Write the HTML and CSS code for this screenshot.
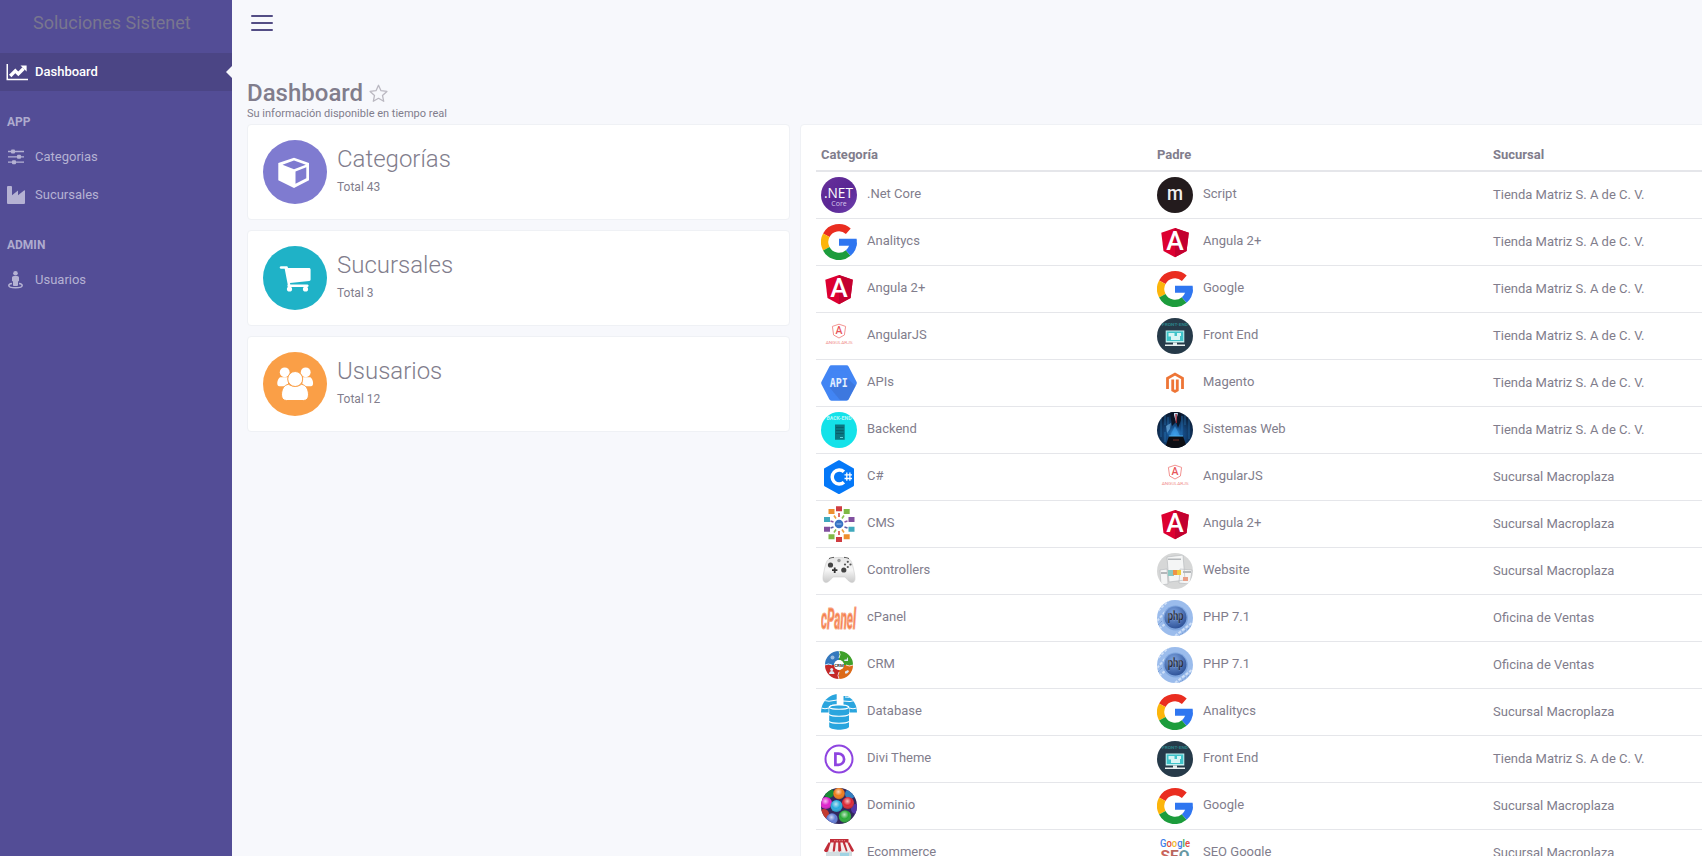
FILE: index.html
```html
<!DOCTYPE html>
<html lang="es">
<head>
<meta charset="utf-8">
<title>Dashboard</title>
<link rel="stylesheet" href="styles.css">
</head>
<body>
<svg class="sprite" width="0" height="0" aria-hidden="true">
  <defs>
    <clipPath id="round"><circle cx="18" cy="18" r="18"/></clipPath>
    <linearGradient id="g-net" x1="0" y1="0" x2="1" y2="1"><stop offset="0" stop-color="#68329b"/><stop offset=".5" stop-color="#5a2694"/><stop offset="1" stop-color="#6d40ae"/></linearGradient>
    <radialGradient id="g-sys" cx=".5" cy=".62" r=".6"><stop offset="0" stop-color="#3aa0f0"/><stop offset=".35" stop-color="#17508c"/><stop offset="1" stop-color="#0b1b33"/></radialGradient>
    <radialGradient id="g-php" cx=".4" cy=".3" r=".75"><stop offset="0" stop-color="#7fa6e2"/><stop offset="1" stop-color="#2b4f95"/></radialGradient>
    <radialGradient id="g-ball" cx=".45" cy=".35" r=".7"><stop offset="0" stop-color="#fff" stop-opacity=".7"/><stop offset=".5" stop-color="#fff" stop-opacity="0"/><stop offset="1" stop-color="#000" stop-opacity=".3"/></radialGradient>
    <linearGradient id="g-pad" x1="0" y1="0" x2="0" y2="1"><stop offset="0" stop-color="#e6e6e6"/><stop offset=".5" stop-color="#f6f6f6"/><stop offset="1" stop-color="#c9c9c9"/></linearGradient>
  </defs>
</svg>
<template id="logos">
  <svg data-name="net" viewBox="0 0 36 36"><circle cx="18" cy="18" r="18" fill="url(#g-net)"/><text x="17.5" y="21" class="t" font-family="Open Sans" font-size="14" textLength="29" lengthAdjust="spacingAndGlyphs" fill="#fff">.NET</text><text x="18" y="28.5" class="t" font-family="Open Sans" font-size="7" fill="#d9c9ee">Core</text></svg>
  <svg data-name="google" viewBox="0 0 36 36"><g fill="none" stroke-width="7.3"><path stroke="#ea2d20" d="M27.3 7.2A14.3 14.3 0 0 0 5.3 11.3"/><path stroke="#fcb50b" d="M5.3 11.3A14.3 14.3 0 0 0 5.3 24.7"/><path stroke="#1c9c3c" d="M5.3 24.7A14.3 14.3 0 0 0 27.2 29"/><path stroke="#2f76f0" d="M27.2 29A14.3 14.3 0 0 0 32.3 18.4"/></g><path fill="#2f76f0" d="M18 14.8h17.6c.4 2.5.2 4.7-.3 7H18z"/></svg>
  <svg data-name="angular" viewBox="0 0 36 36"><path fill="#dd0031" d="M18 4 31.8 8.8 29.6 27 18 33.3 6.5 27 4.3 8.8z"/><path fill="#c3002f" d="M18 4 31.8 8.8 29.6 27 18 33.3z"/><text x="18" y="25.8" class="t" font-family="Roboto" font-weight="500" font-size="25" textLength="17.5" lengthAdjust="spacingAndGlyphs" fill="#fff">A</text></svg>
  <svg data-name="angularjs" viewBox="0 0 36 36"><path fill="none" stroke="#f08784" stroke-width=".9" d="M18 6.2 24.6 8.4 23.4 17 18 20 12.6 17 11.4 8.4z"/><text x="18" y="16.4" class="t" font-family="Roboto" font-weight="500" font-size="10.5" fill="#e8555a">A</text><text x="18.2" y="26.3" class="t" font-family="Roboto" font-size="4.3" textLength="27" lengthAdjust="spacingAndGlyphs" fill="#f08e8c">ANGULARJS</text></svg>
  <svg data-name="api" viewBox="0 0 36 36"><path fill="#4285f4" stroke="#4285f4" stroke-width="5" stroke-linejoin="round" d="M10.500 2.800h15L33.300 18l-7.800 15.200h-15L2.700 18z"/><path fill="#3a70d0" d="M9 23 19 35h8l7.500-14L26 13z" opacity=".6"/><text x="17.800" y="22.400" class="t" font-family="DejaVu Sans Mono" font-weight="700" font-size="11.500" textLength="18" lengthAdjust="spacingAndGlyphs" fill="#e3efff">API</text></svg>
  <svg data-name="backend" viewBox="0 0 36 36"><g clip-path="url(#round)"><path fill="#14e2e9" d="M0 0h36v36H0z"/><text x="18" y="7.600" class="t" font-family="Roboto" font-weight="700" font-size="4.500" textLength="25" lengthAdjust="spacingAndGlyphs" fill="#b5f8fa">BACK-END</text><path fill="#0b7681" d="M14 12.500h9.700v15.200H14z"/><path stroke="#095965" stroke-width=".8" d="M15 15.500h7.700M15 18.500h7.700M15 21.500h7.700"/><path stroke="#7be9ec" stroke-width=".8" d="M19 25.500h3"/></g></svg>
  <svg data-name="csharp" viewBox="0 0 36 36"><path fill="#0478f8" stroke="#0478f8" stroke-width="2" stroke-linejoin="round" d="M18 2.200 32 10v16.300L18 34 4 26.300V10z"/><path fill="none" stroke="#fff" stroke-width="3.500" d="M22.900 12.800a7 7 0 1 0 0 10.400"/><path stroke="#fff" stroke-width="1.300" d="M23.500 15.900h7.500M23.500 19.500h7.500M25.800 13.500v8.200M28.900 13.500v8.200"/></svg>
  <svg data-name="cms" viewBox="0 0 36 36"><g stroke-width="1.600"><path stroke="#d64a44" d="M18 7v4M18 25v4"/><path stroke="#eea03c" d="M13 9.500l2 3M23 26.500l-2-3"/><path stroke="#8cc152" d="M23 9.500l-2 3M13 26.500l2-3"/><path stroke="#8a5aa8" d="M9.500 15l3 1M26.500 15l-3 1"/><path stroke="#5a5fa8" d="M9.500 22l3-1M26.500 22l-3-1"/></g><circle cx="18" cy="18" r="4.300" fill="#3774c4"/><path stroke="#9cc0ea" d="M15.500 18h5"/><path fill="#cf3d42" d="M15 .3h6v5h-6zM15 31h6v5h-6z"/><path fill="#ee8f2e" d="M7.500 3h6v5h-6zM22.700 28.300h6v5h-6z"/><path fill="#7fba45" d="M22.700 3h6v5h-6zM7.500 28.300h6v5h-6z"/><path fill="#3fa9bd" d="M3 11h6v5H3zM27.500 20.700h6v5h-6z"/><path fill="#81519f" d="M27.500 11h6v5h-6zM3 20.700h6v5H3z"/></svg>
  <svg data-name="pad" viewBox="0 0 36 36"><path fill="url(#g-pad)" stroke="#cdcdcd" stroke-width=".6" d="M9 5.500c5-1.500 13-1.500 18 0 3 1 4 4 5.300 9.500 1 5 2.900 11.500.6 13.800-3 2.300-5.900-1.300-8.900-4.800H12c-3 3.500-5.900 7.100-8.900 4.800-2.300-2.300-.4-8.800.6-13.800C5 9.500 6 6.500 9 5.500z"/><path stroke="#555" stroke-width="1" d="M8 5.600c2-1 3.500-1.200 5-1.200M28 5.600c-2-1-3.500-1.200-5-1.200" fill="none"/><circle cx="18" cy="7.500" r="1.700" fill="#999"/><circle cx="9.500" cy="12" r="2.600" fill="#444"/><circle cx="22.800" cy="17" r="2.600" fill="#444"/><path stroke="#333" stroke-width="1.800" d="M13.700 14.500v5.400M11 17.200h5.400"/><g fill="#555"><circle cx="26.800" cy="8.800" r="1.100"/><circle cx="26.800" cy="14" r="1.100"/><circle cx="24" cy="11.500" r="1.100"/><circle cx="29.500" cy="11.500" r="1.100"/></g></svg>
  <svg data-name="cpanel" viewBox="0 0 36 36"><g transform="translate(17.500 29) scale(1 2.300)"><text x="0" y="0" class="t" font-family="Roboto" font-style="italic" font-weight="700" font-size="12.500" textLength="35" lengthAdjust="spacingAndGlyphs" fill="#f47f4e" stroke="#f9a784" stroke-width=".5">cPanel</text></g></svg>
  <svg data-name="crm" viewBox="0 0 36 36"><g fill="none" stroke-width="9.300"><path stroke="#3478bd" d="M8.600 18A9.400 9.400 0 0 1 18 8.600"/><path stroke="#3fa02b" d="M18 8.600A9.400 9.400 0 0 1 27.400 18"/><path stroke="#dc6a18" d="M27.400 18A9.400 9.400 0 0 1 18 27.400"/><path stroke="#c42828" d="M18 27.400A9.400 9.400 0 0 1 8.600 18"/></g><path fill="none" stroke="#fff" stroke-width=".8" d="M18 4q2 3.500 0 7M18 25q-2 3.500 0 7M4 18q3.500-2 7 0M25 18q3.500 2 7 0"/><g fill="#dfe9f4"><circle cx="11.500" cy="10.500" r="2" opacity=".6"/><path d="M23 14l1-2 1 1 2-3v4zM24 24.500l3-1.500 1 1.500-2 2h-2z"/><circle cx="10.700" cy="22.500" r="1.500"/><path d="M8 27c0-4 5.500-4 5.500 0z"/></g><circle cx="18" cy="18" r="5" fill="#fff"/><text x="18" y="19.600" class="t" font-family="Roboto" font-weight="700" font-size="4.400" fill="#333">CRM</text></svg>
  <svg data-name="database" viewBox="0 0 36 36"><g clip-path="url(#round)" fill="#2aa5de"><path d="M0 0h15.700v10.500Q8 10 7.600 14v4.500H0zM22.500 2H36v16.500h-7.600V14q-.4-2-5.900-3z"/><path fill="none" stroke="#fff" stroke-width="1" d="M0 6q8 2.500 16 0M22 7q7 1.500 14-1M0 14q4 1.500 8 0M28 14q4 1.500 8 0M24 3q4 .5 8 0"/></g><path fill="#2aa5de" d="M8.200 13c3-2.500 16.800-2.500 19.800 0v20c-3 3.600-16.800 3.600-19.800 0z"/><path fill="none" stroke="#fff" stroke-width="1.100" d="M8 13.500c3 2.300 17 2.300 20 0M8 20.500c3 2.300 17 2.300 20 0M8 27.500c3 2.300 17 2.300 20 0M8 13c3-3 17-3 20 0"/></svg>
  <svg data-name="divi" viewBox="0 0 36 36"><circle cx="18" cy="18" r="13.500" fill="none" stroke="#8e44e0" stroke-width="2"/><path fill="none" stroke="#8e44e0" stroke-width="2.700" d="M14.400 12.600h3.100a5.600 5.600 0 0 1 0 11.200h-3.100z"/></svg>
  <svg data-name="dominio" viewBox="0 0 36 36"><g clip-path="url(#round)"><path fill="#33275e" d="M0 0h36v36H0z"/><circle cx="8" cy="5" r="5" fill="#1a8a35"/><circle cx="29" cy="6" r="5" fill="#347fbf"/><circle cx="35" cy="21" r="5" fill="#5337a8"/><circle cx="3" cy="26" r="5" fill="#c33b30"/><circle cx="18" cy="5.500" r="5.700" fill="#ee7b1b"/><circle cx="5" cy="15" r="6" fill="#df22cc"/><circle cx="27" cy="15" r="6" fill="#dc2734"/><circle cx="15.500" cy="18" r="6" fill="#28aadd"/><circle cx="24" cy="28.500" r="6.200" fill="#28aa36"/><circle cx="11" cy="31" r="5.700" fill="#607bd4"/><g fill="url(#g-ball)"><circle cx="18" cy="5.500" r="5.700"/><circle cx="5" cy="15" r="6"/><circle cx="27" cy="15" r="6"/><circle cx="15.500" cy="18" r="6"/><circle cx="24" cy="28.500" r="6.200"/><circle cx="11" cy="31" r="5.700"/></g></g></svg>
  <svg data-name="shop" viewBox="0 0 36 36"><path fill="#d3dde0" d="M5 15h26v18H5z"/><path fill="#9fd3e3" d="M19 18h9v8h-9z"/><path fill="#f7eeee" d="M7.500 7.500h21L33 15.500c-.8 2-3.300 2-4.100 0-.9 2-3.400 2-4.300 0-.9 2-3.400 2-4.300 0-.9 2-3.400 2-4.300 0-.9 2-3.400 2-4.300 0-.9 2-3.400 2-4.300 0-.9 2-3.500 2-4.400 0z"/><path fill="#c12c38" d="M9 4h18.500v3.500H9zM7.500 7.500h2.200l-2.400 8c-.8 2-3.300 2-4.300 0zM12.700 7.500h2.200l-1 8.500c-.8 1-1.500 1-2.200-.5zM17.200 7.500h2.200l.9 8c-.6 1-2.200 1.700-3.100.5zM21.700 7.500h2.200l2.700 8.500c-.6.700-1.300.5-2-.5zM26.300 7.500h2.200l4.500 8c-.8 1.500-2 1.500-2.800.8z"/><path stroke="#f0a5a5" stroke-width=".7" stroke-dasharray="1.500 1" d="M13 5.700h11"/></svg>
  <svg data-name="script" viewBox="0 0 36 36"><circle cx="18" cy="18" r="18" fill="#231b1d"/><text x="18" y="23.100" class="t" font-family="Roboto" font-weight="500" font-size="19.500" textLength="16" lengthAdjust="spacingAndGlyphs" fill="#f1efef">m</text></svg>
  <svg data-name="frontend" viewBox="0 0 36 36"><g clip-path="url(#round)"><path fill="#263a49" d="M0 0h36v36H0z"/><text x="18" y="7.500" class="t" font-family="Roboto" font-weight="700" font-size="4.300" textLength="26" lengthAdjust="spacingAndGlyphs" fill="#2b8188">FRONT-END</text><path fill="#c4f1f1" d="M8.700 12.500h18.600v12H8.700z"/><path fill="#3fc3c9" d="M9.700 13.500h16.600v9.500H9.700z"/><path fill="#d8f6f5" d="M11.500 15h6v3.500h-6zM14 18h9v4h-9zM20 15h4v3h-4z"/><path fill="#e7efef" d="M16 24.500h4V27h-4zM8 26.500h20v1.500H8z"/></g></svg>
  <svg data-name="magento" viewBox="0 0 36 36"><path fill="none" stroke="#ee7536" stroke-width="2.800" d="M10.500 24V13.200L18 9l7.500 4.200V24M15.700 14.500v10.700L18 26.500l2.300-1.300V14.500"/></svg>
  <svg data-name="sistemas" viewBox="0 0 36 36"><g clip-path="url(#round)"><path fill="url(#g-sys)" d="M0 0h36v36H0z"/><g stroke="#2c84c8" stroke-width="1" opacity=".55"><path d="M4 5v20M8 1v12M8 20v10M28 2v11M32 5v22M25 4v22M11 5v17"/></g><path fill="#0a1426" d="M13 0h11v8l-3 8-2-6-4 4z"/><path fill="#c9dcef" d="M17 1h4l-1 4-1 5-2-7z"/><path fill="#a32b38" d="M18.300 2h1.500v9h-1z"/><path fill="#79b9e8" d="M9 14l5-3-1 6-3 4z" opacity=".6"/><path fill="#3f9fe8" d="M18 14l5 10H13z" opacity=".6"/><path fill="#0c0e14" d="M12 24h14l4 12H8z"/><path stroke="#4bb1f4" d="M12 24h14"/><path stroke="#733026" d="M16 28h6"/></g></svg>
  <svg data-name="website" viewBox="0 0 36 36"><g clip-path="url(#round)"><path fill="#d6d7d7" d="M0 0h36v36H0z"/><path fill="#f4f5f5" stroke="#b3b7ba" stroke-width=".6" d="M10 4 26 2l2 25-16 2zM3 17l7-1 1 15-7 1zM23 16l12 1-2 14-11-1z"/><path fill="#b3b7ba" d="M11 5.500h13v1.500H11zM4 19h6v2H4zM26 18h8v2h-8z"/><path fill="#8cc9c3" d="M11 17h6v6h-6z"/><path fill="#ee9348" d="M16 17h5v5h-5z"/><path fill="#f1cc3d" d="M20 17h4v5h-4z"/><path fill="#e99f87" d="M26 24h5v4h-5z"/></g></svg>
  <svg data-name="php" viewBox="0 0 36 36"><g clip-path="url(#round)"><path fill="#9bbcec" d="M0 0h36v36H0z"/><path stroke="#cfe0f8" stroke-width="2" stroke-dasharray="3 1.500" d="M-2 14 13-1M0 21 8 12M2 29l6-5M18 36l18-14M26 38l12-10"/><path stroke="#6d92ca" stroke-width=".9" stroke-dasharray="2 1.500" d="M1 8 9 1M1 25l5-5M22 36l14-11"/><circle cx="18.500" cy="18" r="12.500" fill="#7ea5de"/><circle cx="18.500" cy="17.500" r="11" fill="url(#g-php)"/><text x="18.700" y="20" class="t" font-family="Roboto" font-weight="700" font-size="12.500" textLength="16" lengthAdjust="spacingAndGlyphs" fill="#1c2130" stroke="#a5b7d3" stroke-width=".25">php</text></g></svg>
  <svg data-name="seo" viewBox="0 0 36 36"><text x="18" y="12" class="t" font-family="Roboto" font-weight="500" font-size="11.500" textLength="30" lengthAdjust="spacingAndGlyphs"><tspan fill="#3f7ee8">G</tspan><tspan fill="#e34b3e">o</tspan><tspan fill="#f0ba32">o</tspan><tspan fill="#3f7ee8">g</tspan><tspan fill="#3aa757">l</tspan><tspan fill="#e34b3e">e</tspan></text><text x="18" y="25.500" class="t" font-family="Roboto" font-weight="700" font-size="14" textLength="29" lengthAdjust="spacingAndGlyphs"><tspan fill="#c9635a">S</tspan><tspan fill="#b9685f">E</tspan><tspan fill="#6797a2">O</tspan></text></svg>
</template>

<div class="layout">
  <aside class="sidebar">
    <a class="brand">Soluciones Sistenet</a>
    <nav class="menu">
      <a class="item active"><svg class="ico wide" viewBox="0 0 22 18"><path fill="#fff" d="M.5 1h1.500v14.800H22V17.300H.5z"/><path fill="none" stroke="#fff" stroke-width="3.400" d="M4.200 13 9.300 7.900l3 3 5.300-5.400"/><path fill="#fff" d="M14.500 2.500h6.100v6.100z"/></svg><span>Dashboard</span><i class="arrow"></i></a>
      <div class="label">APP</div>
      <a class="item"><svg class="ico" viewBox="0 0 18 18"><path stroke="currentColor" stroke-width="1.300" d="M1 3.500h16M1 8.800h16M1 14.200h16"/><g fill="currentColor"><rect x="4" y="1.500" width="4" height="4" rx="1"/><rect x="10" y="6.800" width="4" height="4" rx="1"/><rect x="5" y="12.200" width="4" height="4" rx="1"/></g></svg><span>Categorias</span></a>
      <a class="item"><svg class="ico" viewBox="0 0 18 18"><path fill="currentColor" d="M0 1a1 1 0 0 1 1-1h3a1 1 0 0 1 1 1v8.300l6-4.800v4.800l6-4.800c.5-.4 1 0 1 .5V17a1 1 0 0 1-1 1H1a1 1 0 0 1-1-1z"/></svg><span>Sucursales</span></a>
      <div class="label">ADMIN</div>
      <a class="item"><svg class="ico" viewBox="0 0 18 18"><g fill="currentColor"><circle cx="8.500" cy="2.300" r="2.300"/><path d="M6.800 5h3.400c1 0 1.800.8 1.800 1.800V10l-1 .6V14c0 .5-.5 1-1 1H7c-.5 0-1-.5-1-1v-3.400L5 10V6.800C5 5.800 5.800 5 6.800 5z"/></g><path fill="none" stroke="currentColor" stroke-width="1.500" d="M5 12.600c-2.500.3-3.200 1-3.200 1.900 0 1.300 3 2.300 6.700 2.300s6.700-1 6.700-2.300c0-.9-.7-1.600-3.200-1.900"/></svg><span>Usuarios</span></a>
    </nav>
  </aside>

  <main class="main">
    <header class="topbar"><button class="burger" aria-label="Menú"><i></i><i></i><i></i></button></header>
    <div class="heading">
      <h1>Dashboard <svg class="star" viewBox="0 0 19 19"><path fill="none" stroke="#bab8c1" stroke-width="1.300" stroke-linejoin="round" d="M9.500 1.300 12 6.700l5.900.7-4.400 4 1.200 5.900-5.200-3-5.200 3 1.200-5.900-4.400-4L7 6.700z"/></svg></h1>
      <p>Su información disponible en tiempo real</p>
    </div>
    <div class="columns">
      <section class="stats">
        <article class="card stat">
          <div class="badge purple"><svg viewBox="0 0 64 64"><path fill="#fff" fill-rule="evenodd" d="M31 17.700 46 23V40.200L31 48 15.300 40.200V23zM31 20.400 19.500 24.700 31 29.300 42.800 24.700zM32.500 31.500V43.700L43.300 38.200V27.300z"/></svg></div>
          <div><h2>Categorías</h2><p>Total 43</p></div>
        </article>
        <article class="card stat">
          <div class="badge teal"><svg viewBox="0 0 64 64" fill="#fff"><path d="M17.800 20.300h5.700c.8 0 1.200.4 1.500 1.600H46c1 0 1.600.6 1.600 1.500V33.500c0 .8-.5 1.300-1.300 1.400L27 37.100l.3 1.400h17.200c1.500 0 1.500 2.500 0 2.500H25.500c-1.200 0-1.400-1-.8-2.500l-3-15.700h-3.900c-1.500 0-1.500-2.500 0-2.500z"/><circle cx="26.500" cy="43" r="2.600"/><circle cx="42.500" cy="43" r="2.600"/></svg></div>
          <div><h2>Sucursales</h2><p>Total 3</p></div>
        </article>
        <article class="card stat">
          <div class="badge orange"><svg viewBox="0 0 64 64" fill="#fff"><circle cx="21.700" cy="20.300" r="4.900"/><circle cx="42.700" cy="20.300" r="4.900"/><path d="M17 25.300h8v9h-8.500c-3.500 0-2.500-7 .5-9zM47.400 25.300h-8v9h8.500c3.500 0 2.500-7-.5-9z"/><g stroke="#fa9f47" stroke-width="1"><path d="M25.500 32.300c4 2.500 9 2.500 13 0 4.500.7 7 5 7 10.500 0 3.500-1.700 5.700-5 5.700h-17c-3.300 0-5-2.200-5-5.700 0-5.500 2.500-9.800 7-10.500z"/><circle cx="32.200" cy="27" r="7.500"/></g></svg></div>
          <div><h2>Ususarios</h2><p>Total 12</p></div>
        </article>
      </section>

      <section class="card listing" id="listing">
        <div class="row head"><div>Categoría</div><div>Padre</div><div>Sucursal</div></div>
      </section>
    </div>
  </main>
</div>
<script src="app.js"></script>
</body>
</html>
```
FILE: styles.css
```css
* { box-sizing: border-box; }
body {
  margin: 0;
  height: 856px;
  overflow: hidden;
  background: #f7f8fc;
  color: #817d8c;
  font: 13px/20px Roboto, sans-serif;
}
h1, h2, p { margin: 0; }
.sprite { position: absolute; }
.t { text-anchor: middle; }
.layout { display: flex; height: 856px; }

.sidebar { flex: none; width: 232px; background: #534d96; color: #b5b2d3; }
.brand {
  display: block;
  height: 53px;
  padding: 10px 0 0 33px;
  font-size: 18px;
  line-height: 25px;
  color: #79768f;
}
.item {
  position: relative;
  display: flex;
  align-items: center;
  height: 38px;
  padding-left: 7px;
}
.item span { flex: none; }
.ico { flex: none; width: 18px; height: 18px; margin-right: 10px; }
.ico.wide { width: 22px; margin: 0 7px 0 -1px; }
.active { background: #4b4585; color: #fff; font-weight: 500; }
.arrow {
  position: absolute;
  right: 0;
  top: 13px;
  border: 6px solid transparent;
  border-left: 0;
  border-right-color: #f7f8fc;
}
.label { height: 47px; padding: 21px 0 0 7px; font-size: 12px; font-weight: 700; color: #aeabce; }

.main { flex: none; width: 1470px; }
.topbar { height: 79px; padding: 15px 0 0 19px; }
.burger {
  display: flex;
  flex-direction: column;
  gap: 5px;
  width: 22px;
  padding: 0;
  border: 0;
  background: none;
}
.burger i { width: 22px; height: 2px; border-radius: 1px; background: #534d85; }
.heading { height: 45px; padding-left: 15px; }
.heading h1 { display: flex; align-items: center; gap: 6px; font-size: 24px; line-height: 29px; font-weight: 500; }
.star { width: 19px; height: 19px; }
.heading p { font-size: 11px; line-height: 12px; }

.columns { display: grid; grid-template-columns: 543px 920px; gap: 10px; padding-left: 15px; }
.stats { display: flex; flex-direction: column; gap: 10px; }
.card { background: #fff; border: 1px solid #eff1f5; border-radius: 4px; }
.stat { display: flex; gap: 10px; height: 96px; padding: 15px; }
.badge { width: 64px; height: 64px; border-radius: 50%; }
.badge svg { display: block; width: 64px; height: 64px; }
.purple { background: #7f7bd0; }
.teal { background: #1fb2c7; }
.orange { background: #fa9f47; }
.stat h2 { padding-top: 2px; font-size: 24px; line-height: 34px; font-weight: 300; }
.stat p { padding-top: 1px; font-size: 12px; line-height: 20px; }

.listing { height: 760px; padding: 15px 0 0 15px; }
.row {
  display: grid;
  grid-template-columns: 336px 336px 228px;
  height: 47px;
  border-bottom: 1px solid #e5e6ea;
}
.row > div { display: flex; align-items: center; gap: 10px; padding-left: 5px; }
.row span { position: relative; top: -1px; }
.head { height: 32px; border-bottom: 2px solid #e5e6ea; font-weight: 700; }
.av { flex: none; width: 36px; height: 36px; }
```
FILE: app.js
```js
const matriz = "Tienda Matriz S. A de C. V.";
const macro = "Sucursal Macroplaza";
const ventas = "Oficina de Ventas";

// [logo, category, parent logo, parent, branch]
const rows = [
  ["net", ".Net Core", "script", "Script", matriz],
  ["google", "Analitycs", "angular", "Angula 2+", matriz],
  ["angular", "Angula 2+", "google", "Google", matriz],
  ["angularjs", "AngularJS", "frontend", "Front End", matriz],
  ["api", "APIs", "magento", "Magento", matriz],
  ["backend", "Backend", "sistemas", "Sistemas Web", matriz],
  ["csharp", "C#", "angularjs", "AngularJS", macro],
  ["cms", "CMS", "angular", "Angula 2+", macro],
  ["pad", "Controllers", "website", "Website", macro],
  ["cpanel", "cPanel", "php", "PHP 7.1", ventas],
  ["crm", "CRM", "php", "PHP 7.1", ventas],
  ["database", "Database", "google", "Analitycs", macro],
  ["divi", "Divi Theme", "frontend", "Front End", matriz],
  ["dominio", "Dominio", "google", "Google", macro],
  ["shop", "Ecommerce", "seo", "SEO Google", macro]
];

const logos = document.getElementById("logos").content;
const listing = document.getElementById("listing");

function cell(logo, text) {
  const div = document.createElement("div");
  if (logo) {
    const svg = logos.querySelector(`[data-name="${logo}"]`).cloneNode(true);
    svg.setAttribute("class", "av");
    const span = document.createElement("span");
    span.textContent = text;
    div.append(svg, span);
  } else {
    div.textContent = text;
  }
  return div;
}

for (const [logo, name, parentLogo, parent, branch] of rows) {
  const row = document.createElement("div");
  row.className = "row";
  row.append(cell(logo, name), cell(parentLogo, parent), cell(null, branch));
  listing.append(row);
}
```
